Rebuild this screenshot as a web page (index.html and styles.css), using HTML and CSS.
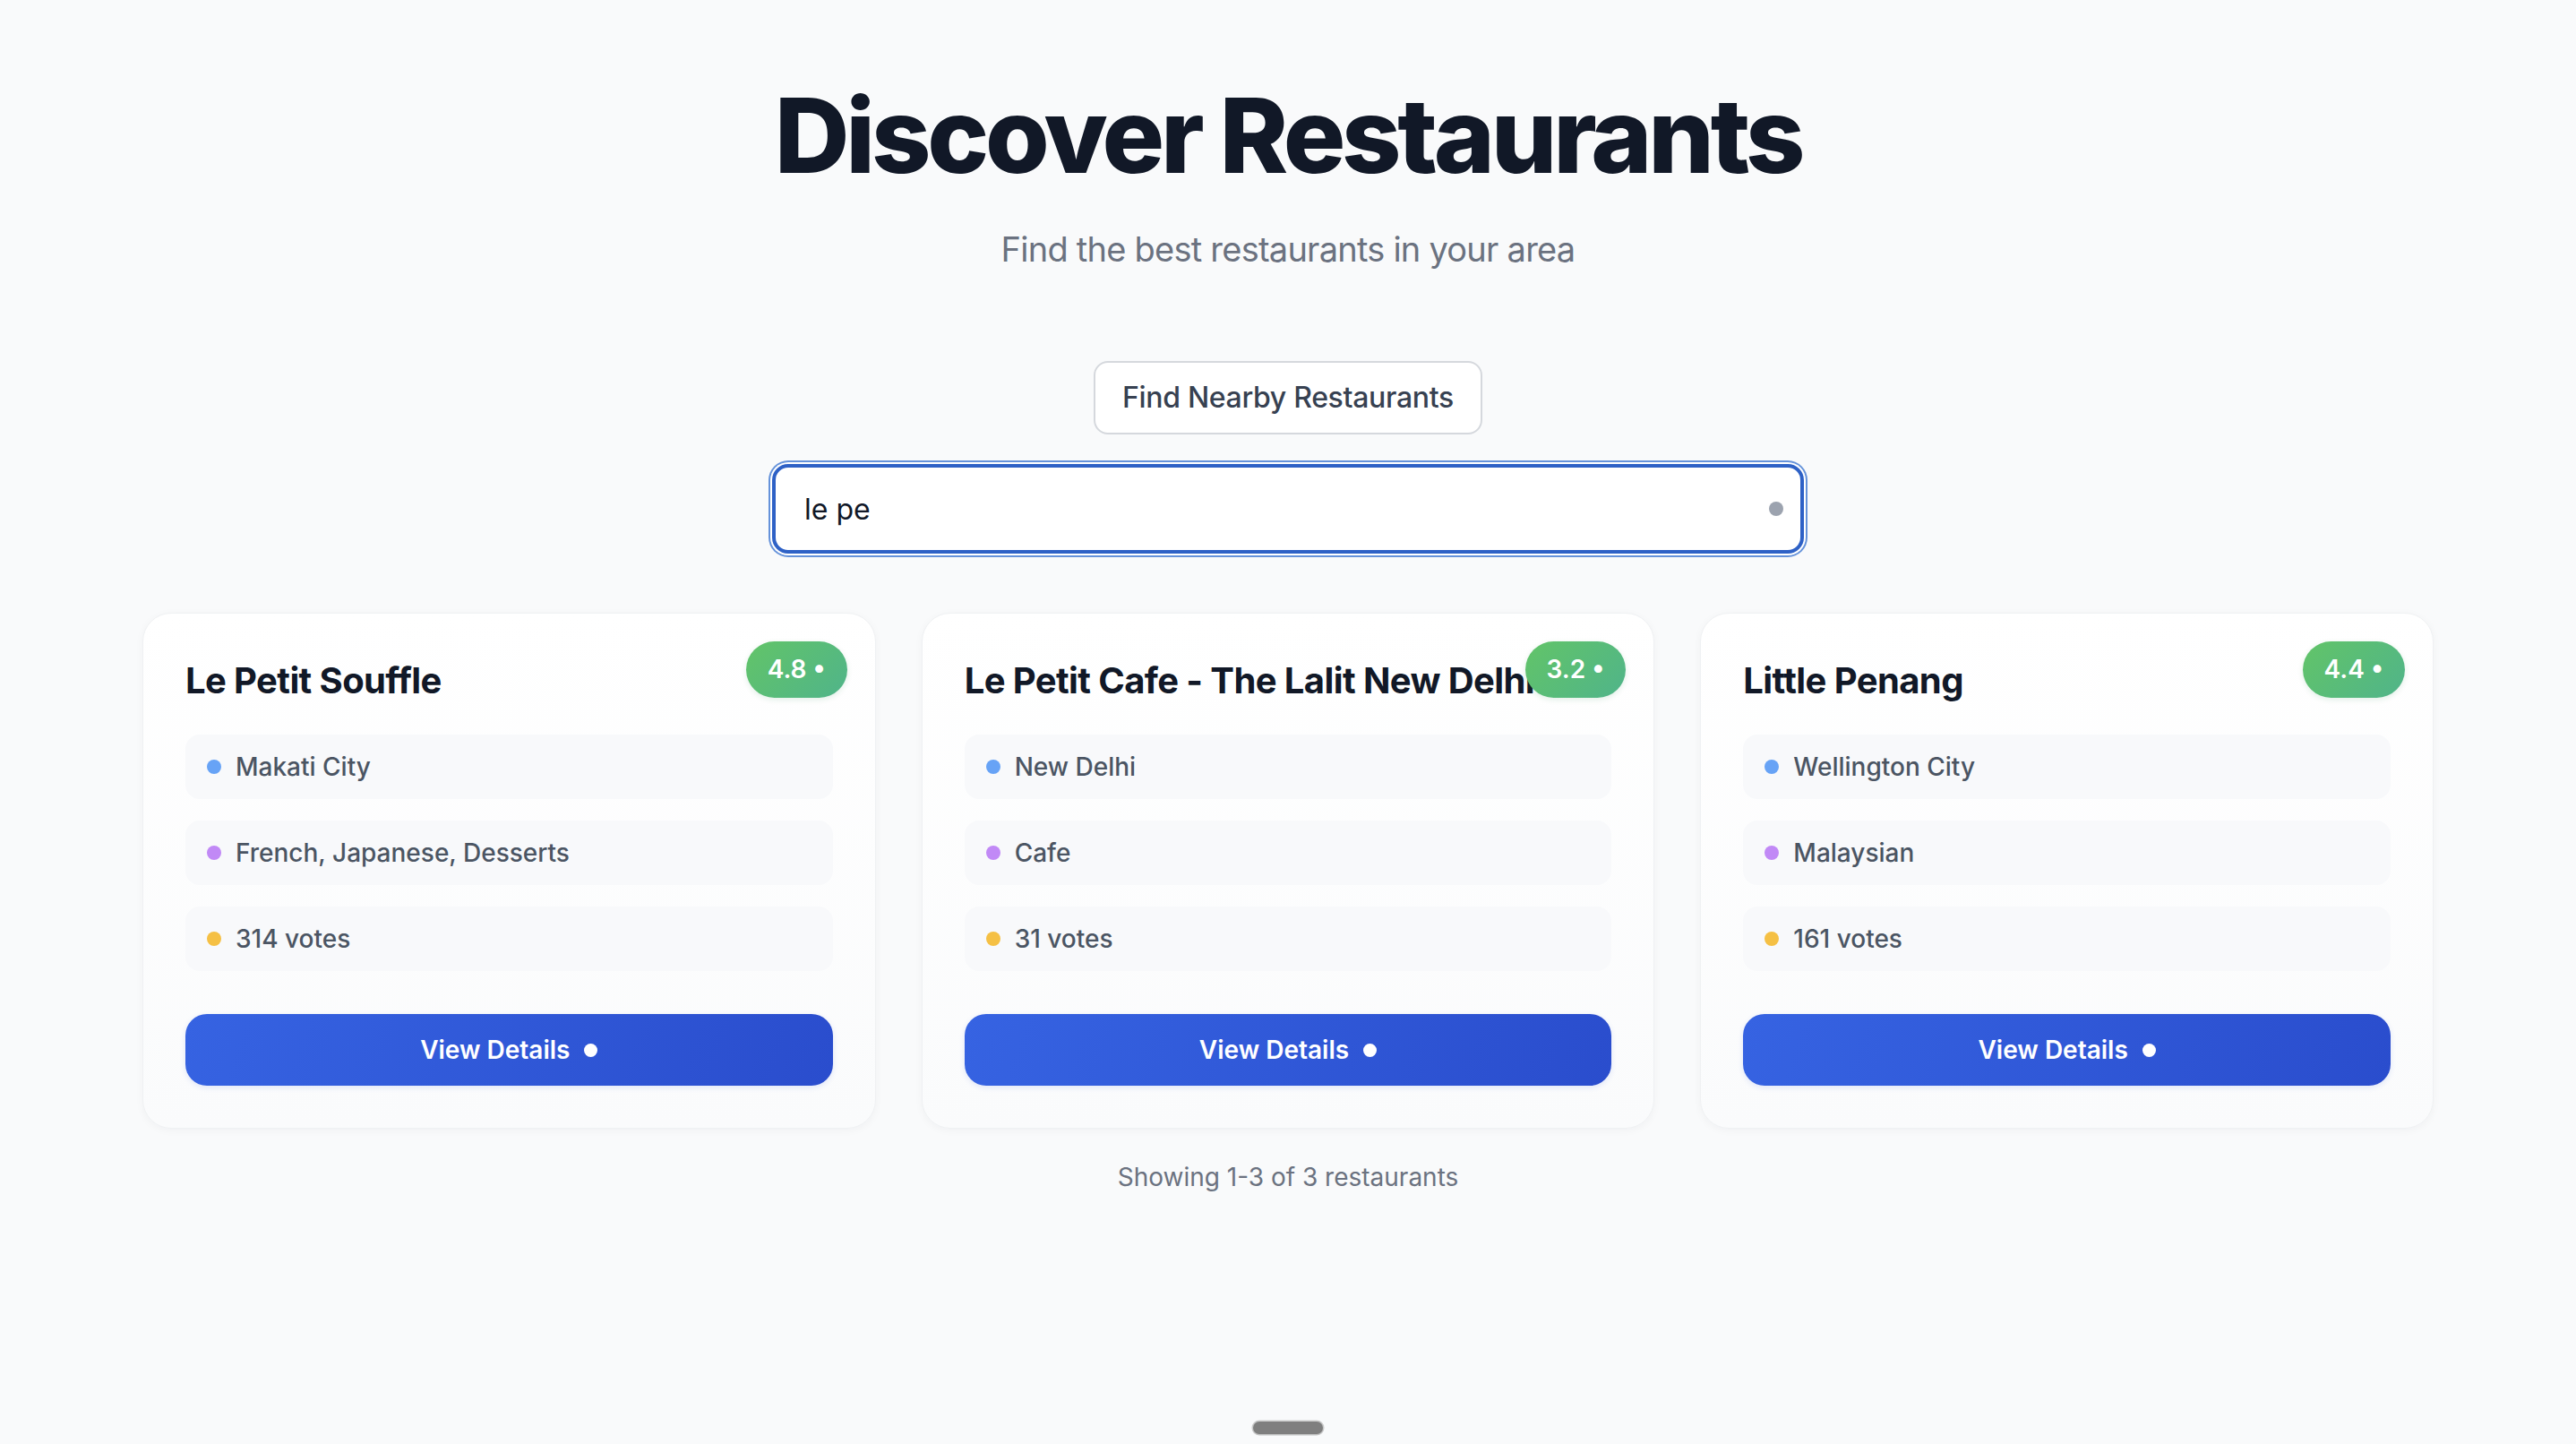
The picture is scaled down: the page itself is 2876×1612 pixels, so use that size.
FILE: index.html
```html
<!DOCTYPE html>
<html lang="en">
<head>
<meta charset="utf-8">
<title>Discover Restaurants</title>
<link rel="stylesheet" href="styles.css">
</head>
<body>
<main class="page">
  <header class="hero">
    <h1 class="hero-title">Discover Restaurants</h1>
    <p class="hero-subtitle">Find the best restaurants in your area</p>
  </header>

  <section class="controls">
    <button class="nearby-btn" type="button">Find Nearby Restaurants</button>
    <div class="search">
      <input class="search-input" type="text" value="le pe" aria-label="Search restaurants">
      <span class="search-dot"></span>
    </div>
  </section>

  <section class="grid">
    <article class="card">
      <span class="badge">4.8 •</span>
      <h2 class="card-title">Le Petit Souffle</h2>
      <div class="rows">
        <div class="row"><span class="dot dot-blue"></span>Makati City</div>
        <div class="row"><span class="dot dot-purple"></span>French, Japanese, Desserts</div>
        <div class="row"><span class="dot dot-yellow"></span>314 votes</div>
      </div>
      <button class="details-btn" type="button">View Details <span class="btn-dot"></span></button>
    </article>

    <article class="card">
      <span class="badge">3.2 •</span>
      <h2 class="card-title">Le Petit Cafe - The Lalit New Delhi</h2>
      <div class="rows">
        <div class="row"><span class="dot dot-blue"></span>New Delhi</div>
        <div class="row"><span class="dot dot-purple"></span>Cafe</div>
        <div class="row"><span class="dot dot-yellow"></span>31 votes</div>
      </div>
      <button class="details-btn" type="button">View Details <span class="btn-dot"></span></button>
    </article>

    <article class="card">
      <span class="badge">4.4 •</span>
      <h2 class="card-title">Little Penang</h2>
      <div class="rows">
        <div class="row"><span class="dot dot-blue"></span>Wellington City</div>
        <div class="row"><span class="dot dot-purple"></span>Malaysian</div>
        <div class="row"><span class="dot dot-yellow"></span>161 votes</div>
      </div>
      <button class="details-btn" type="button">View Details <span class="btn-dot"></span></button>
    </article>
  </section>

  <p class="showing">Showing 1-3 of 3 restaurants</p>
</main>
<div class="home-indicator"></div>
</body>
</html>
```

FILE: styles.css
```css
* { box-sizing: border-box; }

html, body {
  margin: 0;
  padding: 0;
  background: #f9fafb;
  font-family: Inter, "Noto Sans", "Liberation Sans", sans-serif;
  min-height: 100%;
}

body { min-height: 1612px; }

.page {
  padding-top: 91px;
  display: flex;
  flex-direction: column;
  align-items: center;
}

.hero { text-align: center; }

.hero-title {
  margin: 0 0 39px;
  font-size: 116px;
  line-height: 120px;
  font-weight: 800;
  letter-spacing: -0.037em;
  color: #111827;
}

.hero-subtitle {
  margin: 0;
  font-size: 38px;
  line-height: 56px;
  font-weight: 400;
  color: #6b7280;
  letter-spacing: -0.02em;
}

.controls {
  margin-top: 97px;
  display: flex;
  flex-direction: column;
  align-items: center;
}

.nearby-btn {
  padding: 15px 30px;
  border: 2px solid #d5d8dd;
  border-radius: 16px;
  background: #ffffff;
  font-family: inherit;
  font-size: 32px;
  line-height: 48px;
  font-weight: 500;
  letter-spacing: -0.01em;
  color: #374151;
}

.search {
  position: relative;
  margin-top: 33px;
  width: 1152px;
}

.search-input {
  display: block;
  width: 100%;
  height: 100px;
  padding: 0 64px 0 32px;
  border: 4px solid #2e61c6;
  border-radius: 18px;
  background: #ffffff;
  font-family: inherit;
  font-size: 32px;
  color: #111827;
  outline: none;
  box-shadow: 0 0 0 2px #ffffff, 0 0 0 4px #6592da;
}

.search-dot {
  position: absolute;
  right: 23px;
  top: 50%;
  width: 16px;
  height: 16px;
  margin-top: -8px;
  border-radius: 50%;
  background: #9ca3af;
}

.grid {
  margin-top: 66px;
  width: 2558px;
  display: grid;
  grid-template-columns: repeat(3, 1fr);
  gap: 51px;
}

.card {
  position: relative;
  padding: 47px;
  border: 1px solid #eff1f3;
  border-radius: 32px;
  background: linear-gradient(180deg, #ffffff 0%, #fafbfc 100%);
  box-shadow: 0 2px 10px rgba(17, 24, 39, 0.04);
  display: flex;
  flex-direction: column;
}

.badge {
  position: absolute;
  top: 31px;
  right: 31px;
  padding: 12px 24px;
  border-radius: 999px;
  background: linear-gradient(135deg, #62c468 0%, #50b48a 100%);
  color: #ffffff;
  font-size: 28px;
  line-height: 39px;
  font-weight: 600;
  box-shadow: 0 2px 6px rgba(16, 120, 60, 0.12);
}

.card-title {
  margin: 0 0 32px;
  font-size: 40px;
  line-height: 56px;
  font-weight: 700;
  letter-spacing: -0.015em;
  color: #111827;
  white-space: nowrap;
}

.rows {
  display: flex;
  flex-direction: column;
  gap: 24px;
}

.row {
  display: flex;
  align-items: center;
  gap: 16px;
  padding: 16px 24px;
  border-radius: 16px;
  background: #f8f9fb;
  font-size: 28px;
  line-height: 40px;
  font-weight: 500;
  color: #4b5563;
}

.dot {
  width: 16px;
  height: 16px;
  border-radius: 50%;
  flex: none;
}
.dot-blue { background: #67a3f6; }
.dot-purple { background: #c189f6; }
.dot-yellow { background: #f5c044; }

.details-btn {
  margin-top: 48px;
  height: 80px;
  width: 100%;
  border: none;
  border-radius: 24px;
  background: linear-gradient(110deg, #3663e2 0%, #2a4dcd 100%);
  color: #ffffff;
  font-family: inherit;
  font-size: 28px;
  line-height: 40px;
  font-weight: 600;
  display: flex;
  align-items: center;
  justify-content: center;
  gap: 16px;
  box-shadow: 0 2px 6px rgba(37, 78, 210, 0.12);
}

.btn-dot {
  width: 15px;
  height: 15px;
  border-radius: 50%;
  background: #ffffff;
}

.showing {
  margin: 34px 0 0;
  font-size: 28px;
  line-height: 40px;
  color: #6b7280;
}

.home-indicator {
  position: fixed;
  left: 50%;
  bottom: 11px;
  width: 78px;
  height: 14px;
  margin-left: -39px;
  border-radius: 7px;
  background: #7f7f7f;
  box-shadow: 0 0 0 1.5px rgba(190, 190, 190, 0.85);
}
```
